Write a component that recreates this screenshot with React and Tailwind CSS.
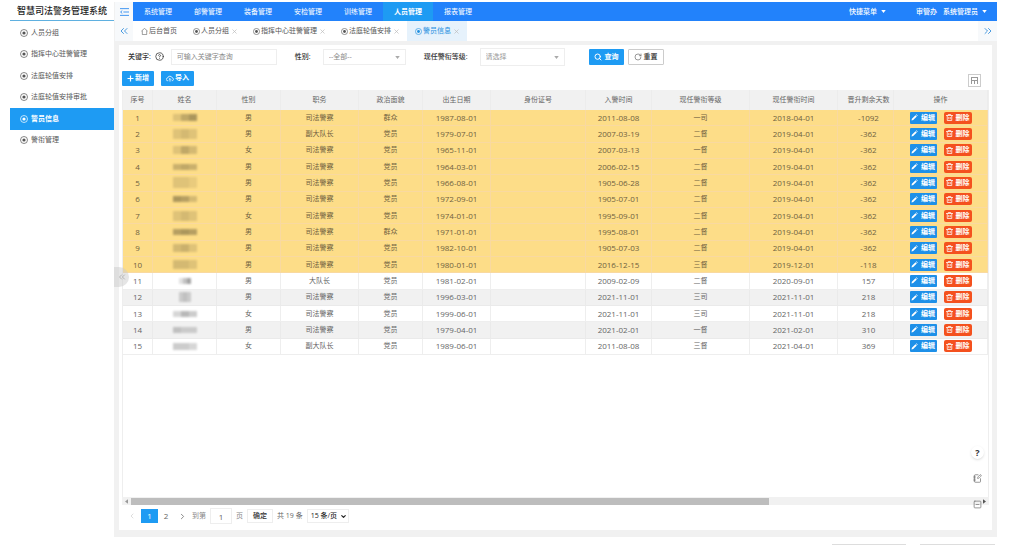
import { useState } from "react";
import {
  ChevronLeft,
  ChevronRight,
  ChevronsLeft,
  ChevronsRight,
  ChevronDown,
  CircleHelp,
  RotateCw,
  Search,
  SquareMinus,
  NotebookPen,
} from "lucide-react";

const sideItems = ["人员分组", "指挥中心驻警管理", "法庭轮值安排", "法庭轮值安排审批", "警员信息", "警衔管理"];

const topItems = ["系统管理", "部警管理", "装备管理", "安检管理", "训练管理", "人员管理", "报表管理"];

const tabs = ["人员分组", "指挥中心驻警管理", "法庭轮值安排", "警员信息"];

const columns = [
  { title: "序号", width: "w-[30px]" },
  { title: "姓名", width: "w-[64px]" },
  { title: "性别", width: "w-[64px]" },
  { title: "职务", width: "w-[78px]" },
  { title: "政治面貌", width: "w-[64px]" },
  { title: "出生日期", width: "w-[68px]" },
  { title: "身份证号", width: "w-[95px]" },
  { title: "入警时间", width: "w-[66px]" },
  { title: "现任警衔等级", width: "w-[98px]" },
  { title: "现任警衔时间", width: "w-[88px]" },
  { title: "晋升剩余天数", width: "w-[56px]" },
  { title: "操作", width: "w-[94px]" },
];

// sex, post, political status, birthday, joined, rank, rank date, days left
const officers = [
  ["男", "司法警察", "群众", "1987-08-01", "2011-08-08", "一司", "2018-04-01", -1092],
  ["男", "副大队长", "党员", "1979-07-01", "2007-03-19", "二督", "2019-04-01", -362],
  ["女", "司法警察", "党员", "1965-11-01", "2007-03-13", "一督", "2019-04-01", -362],
  ["男", "司法警察", "党员", "1964-03-01", "2006-02-15", "二督", "2019-04-01", -362],
  ["男", "司法警察", "党员", "1966-08-01", "1905-06-28", "二督", "2019-04-01", -362],
  ["男", "司法警察", "党员", "1972-09-01", "1905-07-01", "二督", "2019-04-01", -362],
  ["女", "司法警察", "党员", "1974-01-01", "1995-09-01", "二督", "2019-04-01", -362],
  ["男", "司法警察", "群众", "1971-01-01", "1995-08-01", "二督", "2019-04-01", -362],
  ["男", "司法警察", "党员", "1982-10-01", "1905-07-03", "二督", "2019-04-01", -362],
  ["男", "司法警察", "党员", "1980-01-01", "2016-12-15", "三督", "2019-12-01", -118],
  ["男", "大队长", "党员", "1981-02-01", "2009-02-09", "二督", "2020-09-01", 157],
  ["男", "司法警察", "党员", "1996-03-01", "2021-11-01", "三司", "2021-11-01", 218],
  ["女", "司法警察", "党员", "1999-06-01", "2021-11-01", "三司", "2021-11-01", 218],
  ["男", "司法警察", "党员", "1979-04-01", "2021-02-01", "一督", "2021-02-01", 310],
  ["女", "副大队长", "党员", "1989-06-01", "2011-08-08", "三督", "2021-04-01", 369],
];

// Names are hidden behind a mosaic, each row has its own shades
const masks = [
  ["h-[7px]", "w-[8px]", "bg-black/15", "bg-black/30", "bg-black/40"],
  ["h-[10px]", "w-[8px]", "bg-black/15", "bg-black/20", "bg-black/15"],
  ["h-[8px]", "w-[8px]", "bg-black/15", "bg-black/30", "bg-black/20"],
  ["h-[6px]", "w-[8px]", "bg-black/25", "bg-black/30", "bg-black/25"],
  ["h-[11px]", "w-[8px]", "bg-black/15", "bg-black/15", "bg-black/10"],
  ["h-[6px]", "w-[8px]", "bg-black/40", "bg-black/35", "bg-black/20"],
  ["h-[10px]", "w-[8px]", "bg-black/15", "bg-black/20", "bg-black/15"],
  ["h-[6px]", "w-[8px]", "bg-black/35", "bg-black/40", "bg-black/35"],
  ["h-[8px]", "w-[8px]", "bg-black/20", "bg-black/25", "bg-black/15"],
  ["h-[9px]", "w-[8px]", "bg-black/20", "bg-black/20", "bg-black/15"],
  ["h-[6px]", "w-[4px]", "bg-black/15", "bg-black/30", "bg-black/45"],
  ["h-[10px]", "w-[4px]", "bg-black/20", "bg-black/25", "bg-black/20"],
  ["h-[6px]", "w-[8px]", "bg-black/20", "bg-black/35", "bg-black/25"],
  ["h-[6px]", "w-[8px]", "bg-black/25", "bg-black/20", "bg-black/20"],
  ["h-[7px]", "w-[8px]", "bg-black/25", "bg-black/25", "bg-black/20"],
];

function Caret({ className }) {
  return (
    <svg viewBox="0 0 6 4" className={`h-[3px] w-[5px] ${className}`} fill="currentColor">
      <path d="M0 0h6L3 4z" />
    </svg>
  );
}

function MenuIcon() {
  return (
    <svg viewBox="0 0 16 14" className="h-2 w-[9px]" fill="none" stroke="currentColor" strokeWidth="1.6">
      <path d="M0 1h16M6 7h10M0 13h16M4 4.5L1 7l3 2.5" />
    </svg>
  );
}

function DotIcon({ className }) {
  return (
    <svg viewBox="0 0 16 16" className={className}>
      <circle cx="8" cy="8" r="7" fill="none" stroke="currentColor" strokeWidth="1.4" />
      <circle cx="8" cy="8" r="3.2" fill="currentColor" />
    </svg>
  );
}

function HomeIcon() {
  return (
    <svg viewBox="0 0 16 16" className="mr-px size-[7px]" fill="none" stroke="currentColor" strokeWidth="1.3">
      <path d="M1 7L8 1l7 6M3 6v9h10V6" />
    </svg>
  );
}

function CloseIcon() {
  return (
    <svg viewBox="0 0 10 10" className="size-[5px]" fill="none" stroke="currentColor" strokeWidth="1.4">
      <path d="M1 1l8 8M9 1l-8 8" />
    </svg>
  );
}

function PlusIcon() {
  return (
    <svg viewBox="0 0 14 14" className="size-[7px]" stroke="currentColor" strokeWidth="2.4">
      <path d="M7 1v12M1 7h12" />
    </svg>
  );
}

function UploadIcon() {
  return (
    <svg viewBox="0 0 18 14" className="h-[7px] w-2" fill="none" stroke="currentColor" strokeWidth="1.8">
      <path d="M5 12H4a3 3 0 0 1-.5-6A5.5 5.5 0 0 1 14 5.5 3.3 3.3 0 0 1 14 12h-1M9 14V7M6.5 9.5L9 7l2.5 2.5" />
    </svg>
  );
}

function PencilIcon() {
  return (
    <svg viewBox="0 0 14 14" className="size-[7px]" fill="currentColor">
      <path d="M1 13l.8-3.4L9 2.4l2.6 2.6L4.4 12.2zM10 1.5l1-1L13.5 3l-1 1z" />
    </svg>
  );
}

function TrashIcon() {
  return (
    <svg viewBox="0 0 14 14" className="size-[7px]" fill="none" stroke="currentColor" strokeWidth="1.5">
      <path d="M0 3h14M4.5 3V1h5v2M2.500 3v10h9V3M5.500 6v4.500M8.500 6v4.500" />
    </svg>
  );
}

function ColumnsIcon() {
  return (
    <svg viewBox="0 0 7 7" className="size-[7px]" fill="none" stroke="currentColor">
      <path d="M0 .5h7M0 3.5h7M.5 0v7M3.500 3v4M6.500 0v7" />
    </svg>
  );
}

function Sidebar({ active, onSelect }) {
  return (
    <aside className="w-[104px] shrink-0">
      <h1 className="h-[19px] border-b border-[#5fb0e0] text-center text-[9px] leading-[18px] font-medium text-[#222] whitespace-nowrap">
        智慧司法警务管理系统
      </h1>
      <nav className="mt-px grid h-[129px] grid-rows-6">
        {sideItems.map((item) => (
          <button
            key={item}
            onClick={() => onSelect(item)}
            className={`flex items-center gap-[3px] pl-[10px] whitespace-nowrap ${
              item === active ? "bg-[#1e9bf3] font-bold text-white" : "text-[#555]"
            }`}
          >
            <DotIcon className="size-2" />
            {item}
          </button>
        ))}
      </nav>
    </aside>
  );
}

function TopBar() {
  return (
    <header className="flex h-[19px] items-stretch bg-[#2282fb] text-white">
      <button aria-label="收起菜单" className="flex w-[18px] items-center justify-center bg-[#f7f9fb] text-[#2f8cf0]">
        <MenuIcon />
      </button>
      <nav className="flex">
        {topItems.map((item) => (
          <button
            key={item}
            className={`w-[50px] text-center ${item === "人员管理" ? "bg-[#1e9bf3] font-bold" : ""}`}
          >
            {item}
          </button>
        ))}
      </nav>
      <div className="ml-auto flex items-center pr-[10px] font-medium">
        <button className="flex items-center gap-1">
          快捷菜单
          <Caret className="" />
        </button>
        <span className="ml-[30px]">审管办</span>
        <button className="ml-[6px] flex items-center gap-1">
          系统管理员
          <Caret className="" />
        </button>
      </div>
    </header>
  );
}

function TabBar() {
  return (
    <div className="flex h-5 items-stretch bg-white text-[#555]">
      <button aria-label="向左" className="flex w-[18px] items-center justify-center bg-[#f7f9fb] text-[#4a9be0]">
        <ChevronsLeft className="size-[12px]" />
      </button>
      <a href="#home" className="flex items-center px-2">
        <HomeIcon />
        后台首页
      </a>
      {tabs.map((tab) => (
        <div
          key={tab}
          className={`flex items-center px-2 ${tab === "警员信息" ? "bg-[#e6f2fc] text-[#1e8fe0]" : ""}`}
        >
          <a href={`#${tab}`} className="flex items-center">
            <DotIcon className="mr-px size-[7px]" />
            {tab}
          </a>
          <button aria-label={`关闭${tab}`} className="ml-[3px] text-[#bbb]">
            <CloseIcon />
          </button>
        </div>
      ))}
      <button
        aria-label="向右"
        className="ml-auto flex w-[19px] items-center justify-center bg-[#f7f9fb] text-[#4a9be0]"
      >
        <ChevronsRight className="size-[12px]" />
      </button>
    </div>
  );
}

function FilterBar() {
  const [keyword, setKeyword] = useState("");

  return (
    <form className="flex h-[19px] items-center text-[#333]" onSubmit={(e) => e.preventDefault()}>
      <label htmlFor="keyword" className="ml-[6px] font-medium">
        关键字:
      </label>
      <CircleHelp className="ml-1 size-[9px]" />
      <input
        id="keyword"
        value={keyword}
        onChange={(e) => setKeyword(e.target.value)}
        placeholder="可输入关键字查询"
        className="ml-[7px] h-4 w-[106px] border border-[#eee] px-[5px] placeholder:text-[#888]"
      />
      <label htmlFor="sex" className="ml-[18px] font-medium">
        性别:
      </label>
      <div className="relative ml-3">
        <select id="sex" className="h-4 w-[83px] appearance-none border border-[#eee] px-[5px] text-[#888]">
          <option>--全部--</option>
          <option>男</option>
          <option>女</option>
        </select>
        <Caret className="pointer-events-none absolute top-[7px] right-[6px] text-[#aaa]" />
      </div>
      <label htmlFor="rank" className="ml-[18px] font-medium">
        现任警衔等级:
      </label>
      <div className="relative ml-3">
        <select id="rank" className="h-[18px] w-[85px] appearance-none border border-[#eee] px-[5px] text-[#999]">
          <option>请选择</option>
          <option>一督</option>
          <option>二督</option>
          <option>三督</option>
        </select>
        <Caret className="pointer-events-none absolute top-[8px] right-[6px] text-[#aaa]" />
      </div>
      <button className="ml-6 flex h-4 w-[35px] items-center justify-center gap-[3px] rounded-[1px] bg-[#1e9bf3] font-bold text-white">
        <Search className="size-2" strokeWidth={3} />
        查询
      </button>
      <button
        type="reset"
        onClick={() => setKeyword("")}
        className="ml-1 flex h-4 w-9 items-center justify-center gap-[2px] rounded-[1px] border border-[#ccc] font-medium"
      >
        <RotateCw className="size-2 text-[#666]" />
        重置
      </button>
    </form>
  );
}

function NameMask({ index }) {
  const [height, width, a, b, c] = masks[index];
  return (
    <div className={`flex justify-center opacity-80 blur-[1px] ${height}`}>
      <span className={`${width} ${a}`}></span>
      <span className={`${width} ${b}`}></span>
      <span className={`${width} ${c}`}></span>
    </div>
  );
}

function OfficerTable() {
  const getRowColor = (days, index) => {
    if (days < 0) return "bg-[#fddd88] [&>td]:border-[#f9d9a0] text-[#6f6140]";
    return index % 2 ? "bg-[#f1f1f1] [&>td]:border-[#eaeaea]" : "bg-white [&>td]:border-[#eee]";
  };

  return (
    <table className="h-[265px] w-full table-fixed border-separate border-spacing-0 text-center text-[#666]">
      <thead>
        <tr className="h-5 bg-[#f1f1f1]">
          {columns.map((col) => (
            <th key={col.title} className={`border-r border-[#ececec] p-0 font-normal whitespace-nowrap ${col.width}`}>
              <span className={col.title === "晋升剩余天数" ? "pl-[6px]" : ""}>{col.title}</span>
            </th>
          ))}
        </tr>
      </thead>
      <tbody>
        {officers.map(([sex, post, party, birthday, joined, rank, rankDate, days], index) => (
          <tr
            key={index}
            className={`h-4 [&>td]:border-r [&>td]:border-b [&>td]:p-0 ${getRowColor(days, index)}`}
          >
            <td className="text-[8px]">{index + 1}</td>
            <td>
              <NameMask index={index} />
            </td>
            <td>{sex}</td>
            <td>{post}</td>
            <td>{party}</td>
            <td className="text-[8px]">{birthday}</td>
            <td></td>
            <td className="text-[8px]">{joined}</td>
            <td>{rank}</td>
            <td className="text-[8px]">{rankDate}</td>
            <td className="text-[8px]">
              <span className="pl-[6px]">{days}</span>
            </td>
            <td>
              <div className="flex justify-center gap-[7px] font-bold text-white">
                <button className="flex h-3 w-[27px] items-center justify-center gap-[3px] rounded-[1px] bg-[#1e90e8]">
                  <PencilIcon />
                  编辑
                </button>
                <button className="flex h-3 w-7 items-center justify-center gap-[3px] rounded-[2px] bg-[#f4511e]">
                  <TrashIcon />
                  删除
                </button>
              </div>
            </td>
          </tr>
        ))}
      </tbody>
    </table>
  );
}

function ScrollTrack() {
  return (
    <div className="flex h-2 items-center bg-[#f1f1f1] px-[2px] text-[#555]">
      <Caret className="rotate-90 text-[#999]" />
      <div className="flex h-[7px] flex-1 pl-[2px]">
        <div className="w-3/4 bg-[#bdbdbd]"></div>
      </div>
      <Caret className="-rotate-90" />
    </div>
  );
}

function Pagination() {
  return (
    <div className="mb-[3px] flex h-[22px] items-center pl-[6px] text-[#666]">
      <button aria-label="上一页" className="text-[#ccc]">
        <ChevronLeft className="size-2" />
      </button>
      <button className="ml-[5px] h-[14px] w-[17px] bg-[#1e9bf3] text-[8px] text-white">1</button>
      <button className="w-4 text-[8px]">2</button>
      <button aria-label="下一页" className="ml-1">
        <ChevronRight className="size-[9px]" />
      </button>
      <label htmlFor="page" className="ml-[5px] text-[#888]">
        到第
      </label>
      <input id="page" defaultValue="1" className="ml-1 h-4 w-[22px] border border-[#eee] text-center text-[8px]" />
      <span className="ml-1 text-[#888]">页</span>
      <button className="ml-1 h-[14px] w-[26px] border border-[#eee] font-medium text-[#333]">确定</button>
      <span className="ml-1">共 19 条</span>
      <div className="relative ml-1">
        <select
          aria-label="每页条数"
          className="h-[14px] w-[42px] appearance-none border border-[#eee] pl-[3px] font-medium text-[#222]"
        >
          <option>15 条/页</option>
          <option>30 条/页</option>
        </select>
        <ChevronDown className="pointer-events-none absolute top-1 right-[2px] size-[7px] text-[#222]" strokeWidth={4} />
      </div>
    </div>
  );
}

export default function App() {
  const [active, setActive] = useState("警员信息");

  return (
    <div className="flex h-screen min-h-[440px] flex-col overflow-hidden bg-white pt-[2px] pr-[21px] pl-[10px] font-['Open_Sans','Noto_Sans_CJK_SC',sans-serif] text-[7px] leading-[10px]">
      <div className="flex min-h-0 flex-1">
        <Sidebar active={active} onSelect={setActive} />

        <div className="relative flex min-w-0 flex-1 flex-col bg-[#f1f1f1] pl-px">
          <TopBar />
          <TabBar />

          <main className="mt-1 mr-[5px] mb-[7px] ml-1 flex min-h-0 flex-1 flex-col bg-white pt-[2px] pr-[3px] pl-[3px]">
            <FilterBar />
            <div className="mt-1 flex h-[16px] items-center gap-[7px] font-bold text-white">
              <button className="flex h-[15px] w-8 items-center justify-center gap-px rounded-[1px] bg-[#1e9bf3]">
                <PlusIcon />
                新增
              </button>
              <button className="flex h-[15px] w-[33px] items-center justify-center gap-px rounded-[1px] bg-[#1e9bf3]">
                <UploadIcon />
                导入
              </button>
              <button
                aria-label="筛选列"
                className="mt-1 mr-2 ml-auto flex h-[13px] w-[13px] items-center justify-center border border-[#ccc] text-[#999]"
              >
                <ColumnsIcon />
              </button>
            </div>

            <div className="mt-1 flex-1 border-x border-[#eee]">
              <OfficerTable />
            </div>
            <ScrollTrack />
            <Pagination />
          </main>

          {/* Sidebar handle */}
          <button
            aria-label="收起侧栏"
            className="absolute top-[265px] left-0 flex h-5 w-[15px] items-center justify-center rounded-r-full bg-[#ccc]/50 text-[#999]"
          >
            <ChevronsLeft className="size-[10px]" strokeWidth={1.5} />
          </button>

          {/* Floating tools */}
          <div className="absolute right-[13px] bottom-[26px] flex flex-col gap-[13px] text-[#777]">
            <button
              aria-label="帮助"
              className="size-[13px] rounded-full bg-white text-[9px] leading-[13px] font-bold text-[#333] shadow-sm"
            >
              ?
            </button>
            <button aria-label="反馈" className="flex size-[13px] items-center justify-center rounded-full bg-white">
              <NotebookPen className="size-[9px]" />
            </button>
            <button aria-label="收起工具" className="flex size-[13px] items-center justify-center">
              <SquareMinus className="size-[9px]" />
            </button>
          </div>
        </div>
      </div>

      <footer className="flex h-2 items-end justify-end gap-[14px] pr-[2px]">
        <div className="h-px w-[74px] bg-[#ddd]"></div>
        <div className="h-px w-[75px] bg-[#ddd]"></div>
      </footer>
    </div>
  );
}
